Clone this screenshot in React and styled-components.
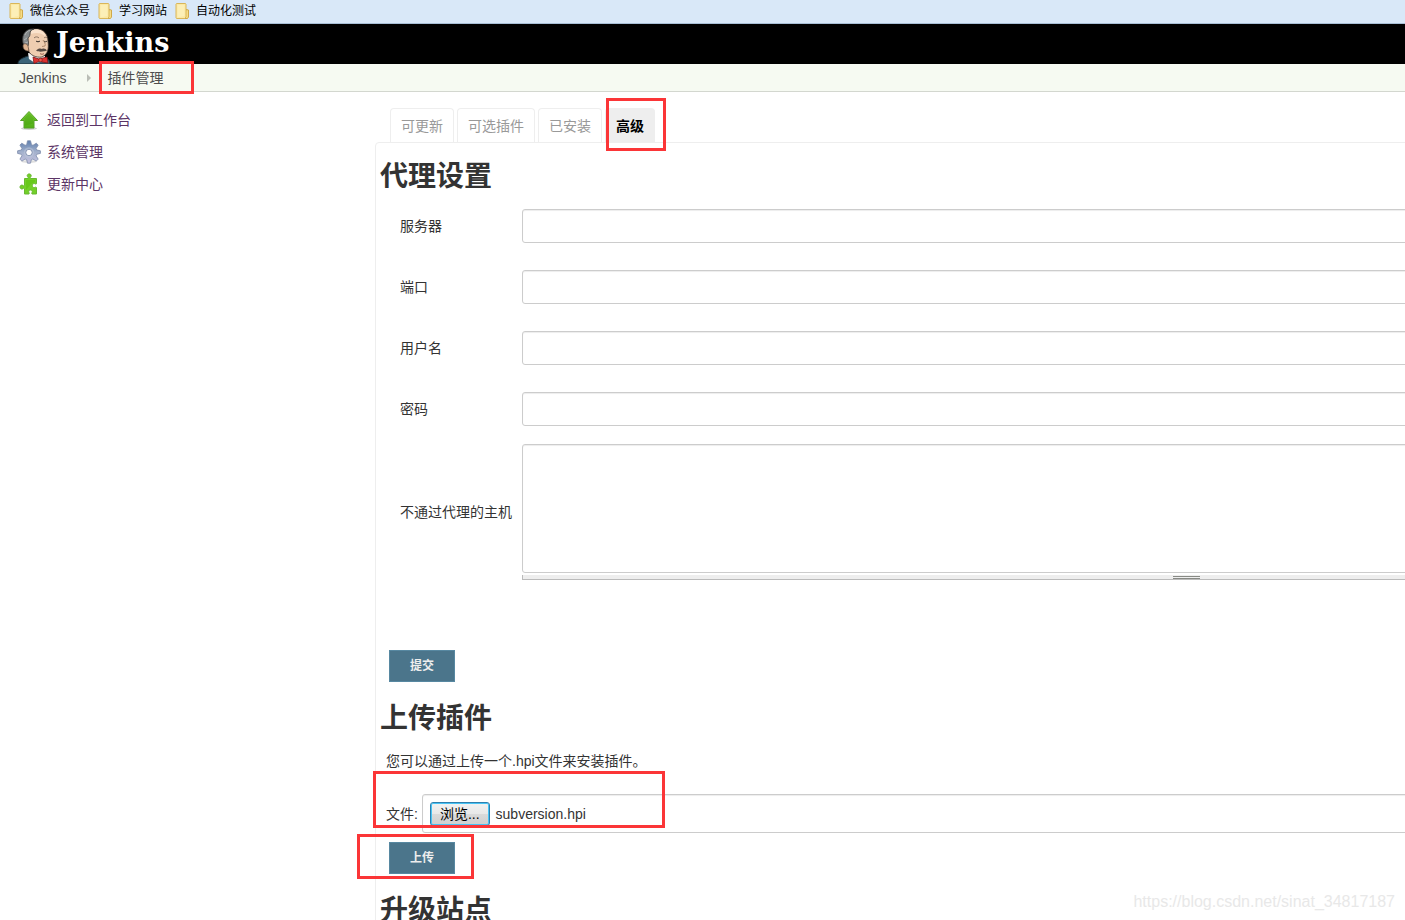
import React, { useRef, useState } from "react";
import styled, { createGlobalStyle, css } from "styled-components";

const bookmarks = ["微信公众号", "学习网站", "自动化测试"];

const tabs = [
  { label: "可更新" },
  { label: "可选插件" },
  { label: "已安装" },
  { label: "高级", active: true },
];

const proxyFields = [
  { id: "proxy-name", label: "服务器", type: "text" },
  { id: "proxy-port", label: "端口", type: "text" },
  { id: "proxy-user", label: "用户名", type: "text" },
  { id: "proxy-password", label: "密码", type: "password" },
];

function FolderIcon() {
  return (
    <svg width="16" height="16" viewBox="0 0 16 16" aria-hidden="true">
      <path d="M12 6.500l2.500.5v7l-1 1.500H10z" fill="#f6dc85" stroke="#cfa94a" />
      <path d="M2.500.500h9l.5.500v13l-1.500 1.500h-8l-.5-.5V1z" fill="#fbe9a4" stroke="#d9b65a" />
      <path d="M3.500 2h7v11l-7 1.500z" fill="#fdf3c4" opacity=".6" />
    </svg>
  );
}

function ButlerIcon() {
  return (
    <svg width="36" height="38" viewBox="0 0 36 38" aria-hidden="true">
      <path d="M1 38c0-3 1-5 10-8l8 3 9-1 4 2 1 4z" fill="#3c6478" stroke="#1b2c35" />
      <path d="M11 27l1 6 6 4 9-2 1-5z" fill="#f6f6f6" />
      <path
        d="M9 20C6 11 9 3 18 3c9-1 13 6 13 12 1 8 0 13-6 16-6 1-13-2-14-8z"
        fill="#efcdb0"
        stroke="#3a302b"
        strokeWidth=".8"
      />
      <path d="M14 4c6-2 13 0 15 7-4-4-9-5-15-3z" fill="#fae2cc" />
      <path d="M7 20C3 10 8 2 17 3c-3 1-4 2-4 5 0 2-1 3-2 4 0 3 1 5 0 8z" fill="#85898b" stroke="#333" strokeWidth=".8" />
      <path d="M8 9c1-3 3-4 5-5M7 14l3-2M8 17l3-1" stroke="#b9bcbd" fill="none" strokeWidth=".8" />
      <path d="M6 20c0-3 4-3 5 0l1 5c-4 0-6-2-6-5z" fill="#dfb491" stroke="#5f483a" strokeWidth=".7" />
      <path d="M17 12c1-1.500 4-1.500 5 0M27 12c1-1 2-1 3 0" fill="none" stroke="#75604f" strokeWidth=".8" />
      <path d="M19 15c1 1 3 1 4 0M27 15c1 1 2 1 3 0" fill="none" stroke="#2f2926" />
      <path d="M26 14c1 2 3 4 2 6l-3 .5" fill="none" stroke="#a37b5d" strokeWidth=".8" />
      <path d="M19 24.500c2-2.500 5-2.500 6-1.500 2-1 4 0 5 1.500-3 1-8 2-11 0z" fill="#574a43" />
      <path d="M23 27.500c1 1 3 1 4 0" fill="none" stroke="#8a4a3b" strokeWidth=".8" />
      <path d="M16 31l6 2 2-.5 6-1.500 1 6-6-1-2-1-6 2.500z" fill="#dc3030" stroke="#7b1515" strokeWidth=".8" />
      <circle cx="23.500" cy="34" r="1.800" fill="#f15447" stroke="#7b1515" strokeWidth=".6" />
    </svg>
  );
}

function UpIcon() {
  return (
    <svg width="24" height="24" viewBox="0 0 24 24" aria-hidden="true">
      <defs>
        <linearGradient id="up" x1="0" y1="0" x2="0" y2="1">
          <stop offset="0" stopColor="#7fd03c" />
          <stop offset="1" stopColor="#4fae14" />
        </linearGradient>
      </defs>
      <ellipse cx="12" cy="20.500" rx="8" ry="1.500" fill="#cfcfcf" />
      <path d="M12 3.500l8.500 9H17v7.500H7v-7.500H3.500z" fill="url(#up)" stroke="#55a126" strokeLinejoin="round" />
      <path d="M12 5l6 6.500h-2v4l-8 2v-6H6z" fill="#3f9a0a" opacity=".35" />
    </svg>
  );
}

function GearIcon() {
  return (
    <svg width="24" height="24" viewBox="0 0 24 24" aria-hidden="true">
      <defs>
        <linearGradient id="gear" x1="0" y1="0" x2="0" y2="1">
          <stop offset="0" stopColor="#5f7fae" />
          <stop offset=".5" stopColor="#a3b1cc" />
          <stop offset="1" stopColor="#c5c2df" />
        </linearGradient>
      </defs>
      <ellipse cx="12" cy="21.500" rx="8" ry="1.500" fill="#dedede" />
      <path
        d="M10.500.8h3l1 3.900 1.500.6 3.300-2.100 1.900 1.900-2.100 3.400.7 1.500 3.600.8v2.600l-3.700.9-.6 1.600 2.100 3.200-2 2-3.300-2.100-1.600.7-.8 3.500h-3l-.8-3.500-1.600-.7-3.200 2.100-2-2 2.100-3.300-.7-1.500-3.700-.9v-2.600l3.700-.8.7-1.500-2.100-3.400 1.900-1.900 3.300 2.100 1.600-.6z"
        fill="url(#gear)"
        stroke="#7c8bab"
        strokeWidth=".8"
        strokeLinejoin="round"
      />
      <circle cx="12" cy="12.500" r="5.200" fill="#c0c9dc" opacity=".5" />
      <circle cx="12" cy="12.500" r="3.200" fill="#fff" stroke="#7283a6" strokeWidth=".8" />
    </svg>
  );
}

function PuzzleIcon() {
  return (
    <svg width="24" height="24" viewBox="0 0 24 24" aria-hidden="true">
      <path
        d="M7.500 6.500h3.500c1-1-.8-1.500-.8-2.800 0-2.400 4-2.400 4 0 0 1.300-1.600 1.800-.8 2.800h6.100v5.200c-1 1-1.500-.3-2.500-.2-2.200.3-2.200 3.900 0 4.100 1 .1 1.500-1 2.500 0v6.400h-4.500c-.8-1 .4-1.500.3-2.500-.3-2-3.400-2-3.600 0-.1 1 1 1.500.3 2.500H7.500v-5.500c-1-1-1.200.5-2.600.5-2.500 0-2.500-3.900 0-3.900 1.400 0 1.600 1.400 2.600.4z"
        fill="#73d028"
        stroke="#69b832"
        strokeLinejoin="round"
      />
      <path d="M9 8h9v2l-4 2-5 6z" fill="#5cc00c" opacity=".5" />
    </svg>
  );
}

const sideLinks = [
  { label: "返回到工作台", Icon: UpIcon },
  { label: "系统管理", Icon: GearIcon },
  { label: "更新中心", Icon: PuzzleIcon },
];

function ProxyForm() {
  return (
    <Form onSubmit={(e) => e.preventDefault()}>
      <Rows>
        {proxyFields.map((f) => (
          <Row key={f.id}>
            <label htmlFor={f.id}>{f.label}</label>
            <TextInput id={f.id} type={f.type} autoComplete="off" />
          </Row>
        ))}
      </Rows>
      <Row>
        <label htmlFor="no-proxy">不通过代理的主机</label>
        <div>
          <TextArea id="no-proxy" />
          <ResizeBar>
            <Grip />
          </ResizeBar>
        </div>
      </Row>
      <SubmitLine $gap="70px">
        <SubmitButton type="submit">提交</SubmitButton>
      </SubmitLine>
    </Form>
  );
}

function UploadForm() {
  const picker = useRef(null);
  const [fileName, setFileName] = useState("subversion.hpi");

  const pickFile = (e) => {
    if (e.target.files[0]) {
      setFileName(e.target.files[0].name);
    }
  };

  return (
    <Form onSubmit={(e) => e.preventDefault()}>
      <Hint>您可以通过上传一个.hpi文件来安装插件。</Hint>
      <FileLine>
        <label htmlFor="plugin-file">文件:</label>
        <FileBox>
          <input id="plugin-file" type="file" hidden ref={picker} onChange={pickFile} />
          <BrowseButton type="button" onClick={() => picker.current.click()}>
            浏览...
          </BrowseButton>
          <span>{fileName}</span>
        </FileBox>
        <Mark $top="-23px" $left="-13px" $width="292px" $height="57px" />
      </FileLine>
      <SubmitLine $gap="9px">
        <SubmitButton type="submit">上传</SubmitButton>
        <Mark $top="-8px" $left="-32px" $width="117px" $height="45px" />
      </SubmitLine>
    </Form>
  );
}

function App() {
  return (
    <Page>
      <GlobalStyle />
      <BookmarkBar>
        {bookmarks.map((name) => (
          <Bookmark key={name} href="#">
            <FolderIcon />
            {name}
          </Bookmark>
        ))}
      </BookmarkBar>
      <Header>
        <Brand href="#">
          <ButlerIcon />
          <BrandName>Jenkins</BrandName>
        </Brand>
      </Header>
      <Breadcrumbs>
        <Crumb href="#">Jenkins</Crumb>
        <Arrow />
        <Crumb href="#">
          插件管理
          <Mark $top="-3px" $left="-8px" $width="95px" $height="33px" />
        </Crumb>
      </Breadcrumbs>
      <Columns>
        <Side>
          {sideLinks.map(({ label, Icon }) => (
            <SideLink key={label} href="#">
              <Icon />
              {label}
            </SideLink>
          ))}
        </Side>
        <Main>
          <TabBar>
            {tabs.map((tab) => (
              <Tab key={tab.label} href="#" $active={tab.active}>
                {tab.label}
                {tab.active && <Mark $top="-11px" $left="0" $width="60px" $height="53px" />}
              </Tab>
            ))}
          </TabBar>
          <Panel>
            <Title>代理设置</Title>
            <ProxyForm />
            <Title>上传插件</Title>
            <UploadForm />
            <Title>升级站点</Title>
          </Panel>
        </Main>
      </Columns>
      <Watermark>https://blog.csdn.net/sinat_34817187</Watermark>
    </Page>
  );
}

const GlobalStyle = createGlobalStyle`
  * {
    box-sizing: border-box;
  }
  body {
    margin: 0;
    background: #fff;
    color: #333;
    font: 14px/20px "Liberation Sans", "Noto Sans CJK SC", sans-serif;
  }
  a {
    color: inherit;
    text-decoration: none;
  }
  svg {
    display: block;
    flex: none;
  }
`;

const Page = styled.div`
  position: relative;
  display: flex;
  flex-direction: column;
  height: 100vh;
  overflow: hidden;
`;

const BookmarkBar = styled.nav`
  display: flex;
  flex: none;
  align-items: center;
  gap: 7px;
  height: 24px;
  padding: 0 8px 2px;
  background: #d9e8f8;
  border-bottom: 1px solid #a9bfd6;
`;

const Bookmark = styled.a`
  display: flex;
  align-items: center;
  gap: 6px;
  color: #000;
  font-size: 12px;
`;

const Header = styled.header`
  display: flex;
  flex: none;
  height: 40px;
  padding-left: 17px;
  background: #000;
`;

const Brand = styled.a`
  display: flex;
  align-items: flex-end;
  gap: 3px;
`;

const BrandName = styled.span`
  height: 40px;
  color: #fff;
  font: bold 27px/38px "DejaVu Serif", serif;
`;

const Breadcrumbs = styled.nav`
  display: flex;
  flex: none;
  align-items: center;
  height: 28px;
  padding-left: 19px;
  background: #f6faf2;
  border-bottom: 1px solid #d3d7cf;
`;

const Crumb = styled.a`
  position: relative;
  display: flex;
  align-items: center;
  height: 28px;
  color: #4d4d4d;
`;

const Arrow = styled.span`
  margin: 0 16px 0 21px;
  border: 4px solid transparent;
  border-right: 0;
  border-left-color: #babdb6;
`;

const Columns = styled.div`
  display: flex;
  flex: 1;
  min-height: 0;
  padding-top: 16px;
`;

const Side = styled.nav`
  display: flex;
  flex: none;
  flex-direction: column;
  gap: 8px;
  width: 375px;
  padding-left: 17px;
`;

const SideLink = styled.a`
  display: flex;
  align-items: center;
  gap: 6px;
  height: 24px;
  color: #5c3566;
`;

/* the form is wider than the window and runs off its right side */
const Main = styled.main`
  flex: 1;
  min-width: 0;
  margin-right: -446px;
`;

const TabBar = styled.div`
  display: flex;
  gap: 3px;
  padding-left: 15px;
`;

const Tab = styled.a`
  position: relative;
  height: 34px;
  padding: 0 10px;
  border: 1px solid #eee;
  border-bottom: 0;
  border-radius: 4px 4px 0 0;
  color: #999;
  line-height: 34px;
  ${(p) =>
    p.$active &&
    css`
      background: #eee;
      color: #000;
      font-weight: bold;
    `}
`;

const Panel = styled.div`
  padding: 13px 0 0 4px;
  border: 1px solid #eee;
  border-radius: 4px 0 0 0;
`;

const Title = styled.h1`
  margin: 0 0 11px;
  font-size: 28px;
  line-height: 42px;
`;

const Form = styled.form`
  margin-bottom: 16px;
`;

const Rows = styled.div`
  display: grid;
  gap: 27px;
  margin-bottom: 18px;
`;

const Row = styled.div`
  display: grid;
  grid-template-columns: 122px 1fr;
  align-items: center;
  padding-left: 20px;
`;

const field = css`
  display: block;
  width: 100%;
  border: 1px solid #ccc;
  border-radius: 3px;
  background: #fff;
  box-shadow: inset 0 1px 1px rgba(0, 0, 0, 0.075);
`;

const TextInput = styled.input`
  ${field}
  height: 34px;
  padding: 6px;
  font: inherit;
`;

const TextArea = styled.textarea`
  ${field}
  height: 129px;
  padding: 6px;
  font: inherit;
  resize: none;
`;

const ResizeBar = styled.div`
  display: flex;
  justify-content: center;
  height: 5px;
  margin-top: 2px;
  padding-top: 1px;
  background: #eee;
  border: solid #bbb;
  border-width: 0 0 1px 1px;
`;

const Grip = styled.span`
  width: 27px;
  height: 3px;
  border: solid #888a85;
  border-width: 1px 0;
`;

const SubmitLine = styled.div`
  position: relative;
  margin: ${(p) => p.$gap} 0 0 9px;
`;

const SubmitButton = styled.button`
  display: block;
  height: 32px;
  padding: 0 20px;
  border: 1px solid #5788a1;
  background: #4b758b;
  color: #eee;
  font: bold 12px/30px "Liberation Sans", "Noto Sans CJK SC", sans-serif;
`;

const Hint = styled.p`
  margin: 0 0 23px 6px;
`;

const FileLine = styled.div`
  position: relative;
  display: flex;
  align-items: center;
  gap: 4px;
  margin-left: 6px;
`;

const FileBox = styled.div`
  ${field}
  display: flex;
  flex: 1;
  align-items: center;
  gap: 6px;
  height: 39px;
  padding: 0 7px;
`;

const BrowseButton = styled.button`
  height: 24px;
  padding: 0 9px;
  border: 1px solid #2f7fae;
  border-radius: 3px;
  background: linear-gradient(#f2f2f2, #e8e8e8 50%, #dadada 50%, #cfcfcf);
  box-shadow: inset 0 0 0 1px #48c4f5;
  color: #000;
  font: inherit;
`;

/* red frame drawn over the part that a step points at */
const Mark = styled.span`
  position: absolute;
  z-index: 1;
  top: ${(p) => p.$top};
  left: ${(p) => p.$left};
  width: ${(p) => p.$width};
  height: ${(p) => p.$height};
  border: 3px solid #fb3537;
  pointer-events: none;
`;

const Watermark = styled.div`
  position: absolute;
  right: 10px;
  bottom: 8px;
  color: #e8e8e8;
  font-size: 16px;
`;

export default App;
